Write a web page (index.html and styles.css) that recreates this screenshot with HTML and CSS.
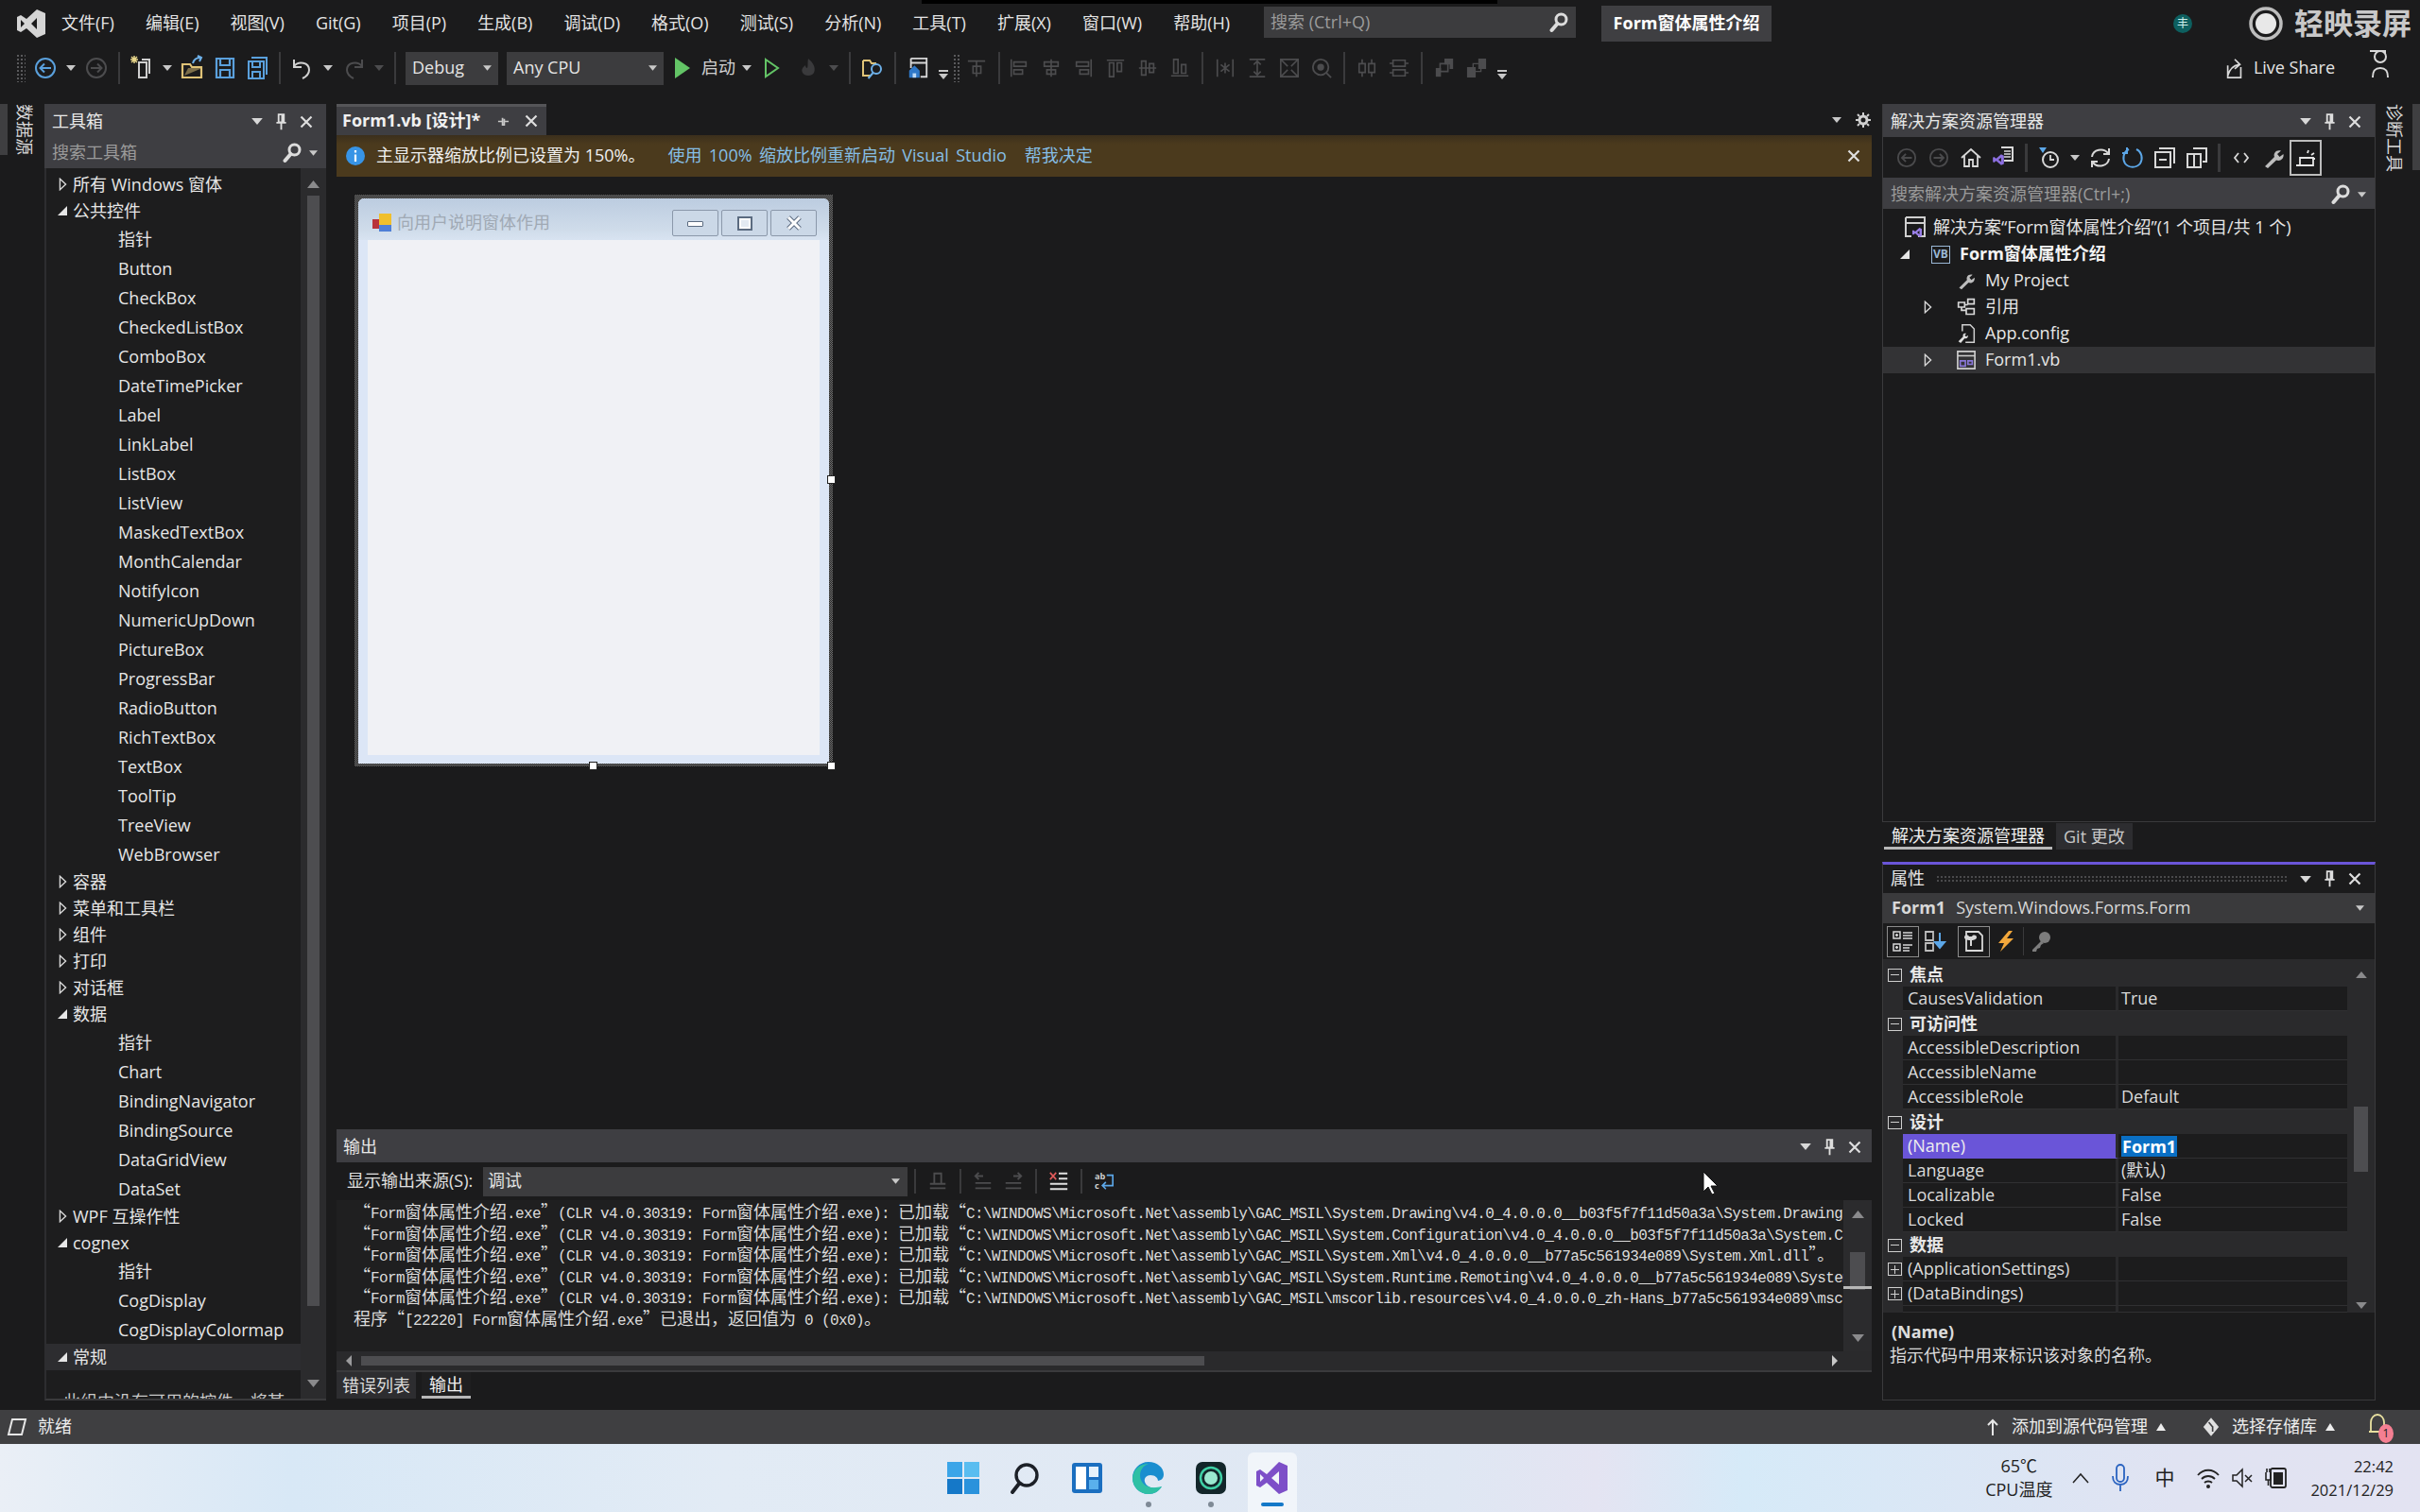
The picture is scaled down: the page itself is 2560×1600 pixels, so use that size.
FILE: index.html
```html
<!DOCTYPE html>
<html lang="zh-CN">
<head>
<meta charset="utf-8">
<title>Form窗体属性介绍</title>
<link rel="stylesheet" href="styles.css">
</head>
<body>
<svg class="defs" width="0" height="0">
  <symbol id="caret" viewBox="0 0 10 6"><path d="M0 0h10L5 6z" fill="currentColor"/></symbol>
  <symbol id="pin" viewBox="0 0 14 20"><path d="M4 1.500h6v9H4zM8 2v8M1.500 11h11M7 11v8" fill="none" stroke="currentColor" stroke-width="2"/></symbol>
  <symbol id="close" viewBox="0 0 14 14"><path d="M1.500 1.500l11 11M12.500 1.500l-11 11" fill="none" stroke="currentColor" stroke-width="2.200"/></symbol>
  <symbol id="lens" viewBox="0 0 20 22"><circle cx="12.500" cy="7.500" r="5.500" fill="none" stroke="currentColor" stroke-width="3"/><path d="M8.500 12L2.500 19" stroke="currentColor" stroke-width="4" stroke-linecap="round"/></symbol>
  <symbol id="open" viewBox="0 0 10 16"><path d="M1.500 1.500L8.500 8l-7 6.500z" fill="none" stroke="currentColor" stroke-width="1.600"/></symbol>
  <symbol id="shut" viewBox="0 0 12 12"><path d="M11 1v10H1z" fill="currentColor"/></symbol>
  <symbol id="circleL" viewBox="0 0 24 24"><circle cx="12" cy="12" r="10" fill="none" stroke="currentColor" stroke-width="2"/><path d="M18 12H7M11 7.500L6.500 12l4.500 4.500" fill="none" stroke="currentColor" stroke-width="2"/></symbol>
  <symbol id="circleR" viewBox="0 0 24 24"><circle cx="12" cy="12" r="10" fill="none" stroke="currentColor" stroke-width="2"/><path d="M6 12h11M13 7.500l4.500 4.500-4.500 4.500" fill="none" stroke="currentColor" stroke-width="2"/></symbol>
  <symbol id="save" viewBox="0 0 24 24"><path d="M3 2h18v20H3z M7 2v7h10V2 M7 22v-8h10v8" fill="none" stroke="currentColor" stroke-width="2.200"/></symbol>
  <symbol id="saveall" viewBox="0 0 24 24"><path d="M6 1h16v18 M3 5h16v18H3z M7 5v6h8V5 M7 23v-7h8v7" fill="none" stroke="currentColor" stroke-width="2"/></symbol>
  <symbol id="alL" viewBox="0 0 24 24"><path d="M3 2v20M6 5h14v5H6zM6 14h10v5H6z" fill="none" stroke="currentColor" stroke-width="1.800"/></symbol>
  <symbol id="alC" viewBox="0 0 24 24"><path d="M12 2v20M4 5h16v5H4zM7 14h10v5H7z" fill="none" stroke="currentColor" stroke-width="1.800"/></symbol>
  <symbol id="alR" viewBox="0 0 24 24"><path d="M21 2v20M4 5h14v5H4zM8 14h10v5H8z" fill="none" stroke="currentColor" stroke-width="1.800"/></symbol>
  <symbol id="alT" viewBox="0 0 24 24"><path d="M2 3h20M5 6h5v16H5zM14 6h5v10h-5z" fill="none" stroke="currentColor" stroke-width="1.800"/></symbol>
  <symbol id="alM" viewBox="0 0 24 24"><path d="M2 12h20M5 4h5v16H5zM14 7h5v10h-5z" fill="none" stroke="currentColor" stroke-width="1.800"/></symbol>
  <symbol id="alB" viewBox="0 0 24 24"><path d="M2 21h20M5 2h5v16H5zM14 8h5v10h-5z" fill="none" stroke="currentColor" stroke-width="1.800"/></symbol>
  <symbol id="spH" viewBox="0 0 24 24"><path d="M3 2v20M21 2v20M12 6v12M7 8l10 8M17 8L7 16" fill="none" stroke="currentColor" stroke-width="1.800"/></symbol>
  <symbol id="spV" viewBox="0 0 24 24"><path d="M3 2h18M3 22h18M12 5v14M8 8l4-4 4 4M8 16l4 4 4-4" fill="none" stroke="currentColor" stroke-width="1.800"/></symbol>
  <symbol id="full" viewBox="0 0 24 24"><path d="M2 2h20v20H2zM3 3l7 7M21 3l-7 7M3 21l7-7M21 21l-7-7" fill="none" stroke="currentColor" stroke-width="1.800"/></symbol>
  <symbol id="zoomd" viewBox="0 0 24 24"><circle cx="11" cy="11" r="9" fill="none" stroke="currentColor" stroke-width="2"/><circle cx="11" cy="11" r="4" fill="currentColor"/><path d="M17 17l6 6" stroke="currentColor" stroke-width="2"/></symbol>
  <symbol id="cenH" viewBox="0 0 24 24"><path d="M3 7h7v10H3zM14 7h7v10h-7zM6.500 2v5M6.500 17v5M17.500 2v5M17.500 17v5" fill="none" stroke="currentColor" stroke-width="1.800"/></symbol>
  <symbol id="cenV" viewBox="0 0 24 24"><path d="M5 3h14v7H5zM5 14h14v7H5zM1 6.500h4M19 6.500h4M1 17.500h4M19 17.500h4" fill="none" stroke="currentColor" stroke-width="1.800"/></symbol>
  <symbol id="front" viewBox="0 0 24 24"><path d="M12 1h10v12h-4V8h-6z" fill="currentColor"/><path d="M2 12h6v10H2z" fill="currentColor"/><path d="M7 7h9v9H7z" fill="none" stroke="currentColor" stroke-width="1.800"/></symbol>
  <symbol id="back" viewBox="0 0 24 24"><path d="M14 1h9v12h-9zM1 11h10v12H1z" fill="currentColor"/><path d="M8 7h9v9H8z" fill="none" stroke="currentColor" stroke-width="1.500"/></symbol>
  <symbol id="wrench" viewBox="0 0 24 24"><path d="M3 21l10-10c-1.500-4 2-8 7-6.500l-4 3.500 2.500 3 4-3c1 5-3.500 8-7.500 6.500L6 23z" fill="currentColor"/></symbol>
  <symbol id="vs" viewBox="0 0 24 24"><path d="M17 2l5 2.500v15L17 22 8 14l-4 3-2-1V8l2-1 4 3zM17 8l-5 4 5 4z" fill="currentColor" fill-rule="evenodd"/></symbol>
</svg>
<div class="blackout"></div>

<header class="titlebar">
  <svg class="vslogo" viewBox="0 0 30 30"><path d="M21 0l9 4v22l-9 4-11-10-6 4-4-2V8l4-2 6 4zM21 9l-6 6 6 6zM4 11v8l4-4z" fill="#d5d5d5" fill-rule="evenodd"/></svg>
  <nav class="menu">
    <span>文件(F)</span><span>编辑(E)</span><span>视图(V)</span><span>Git(G)</span><span>项目(P)</span><span>生成(B)</span><span>调试(D)</span><span>格式(O)</span><span>测试(S)</span><span>分析(N)</span><span>工具(T)</span><span>扩展(X)</span><span>窗口(W)</span><span>帮助(H)</span>
  </nav>
  <div class="qsearch"><span>搜索 (Ctrl+Q)</span><svg class="lens"><use href="#lens"/></svg></div>
  <div class="soltitle">Form窗体属性介绍</div>
  <div class="avatar">丰</div>
  <svg class="ring" viewBox="0 0 36 36"><circle cx="18" cy="18" r="16" fill="none" stroke="#bdbdbd" stroke-width="3.500"/><circle cx="18" cy="18" r="11" fill="#e8e8e8"/></svg>
  <div class="recname">轻映录屏</div>
</header>

<div class="toolbar">
  <span class="dots"></span>
  <span class="cell first blue"><svg class="i24"><use href="#circleL"/></svg></span>
  <span class="cw"><svg class="c10"><use href="#caret"/></svg></span>
  <span class="cell dim2"><svg class="i24"><use href="#circleR"/></svg></span>
  <span class="sep"></span>
  <span class="cell"><svg class="i28" viewBox="0 0 28 28"><path d="M11 8h8v16h-8zM14 5h8v15" fill="none" stroke="#cfcfcf" stroke-width="2"/><path d="M6 1v8M2 5h8M3 2l6 6M9 2L3 8" stroke="#e8d68a" stroke-width="1.500"/></svg></span>
  <span class="cw"><svg class="c10"><use href="#caret"/></svg></span>
  <span class="cell"><svg class="i28" viewBox="0 0 28 28"><path d="M3 10h8l2 3h10v11H3z" fill="none" stroke="#e0c377" stroke-width="2.200"/><path d="M5 22l4-8h15" fill="#e0c377" opacity=".5"/><path d="M14 9c1-4 4-6 8-6M19 1l4 2-2 4" fill="none" stroke="#6db0e8" stroke-width="2"/></svg></span>
  <span class="cell blue"><svg class="i24"><use href="#save"/></svg></span>
  <span class="cell blue"><svg class="i24"><use href="#saveall"/></svg></span>
  <span class="sep"></span>
  <span class="cell"><svg class="i24" viewBox="0 0 24 24"><path d="M3 3v8h8M3 10c5-6 16-4 16 4 0 4-3 7-7 9" fill="none" stroke="#d0d0d0" stroke-width="2"/></svg></span>
  <span class="cw"><svg class="c10"><use href="#caret"/></svg></span>
  <span class="cell dim2"><svg class="i24" viewBox="0 0 24 24"><path d="M21 3v8h-8M21 10c-5-6-16-4-16 4 0 4 3 7 7 9" fill="none" stroke="currentColor" stroke-width="2"/></svg></span>
  <span class="cw dim2"><svg class="c10"><use href="#caret"/></svg></span>
  <span class="sep"></span>
  <div class="combo debug"><span>Debug</span><svg class="c8"><use href="#caret"/></svg></div>
  <div class="combo cpu"><span>Any CPU</span><svg class="c8"><use href="#caret"/></svg></div>
  <svg class="play" viewBox="0 0 16 22"><path d="M0 0l16 11L0 22z" fill="#63c466"/></svg>
  <span class="runlabel">启动</span>
  <span class="cw tight"><svg class="c10"><use href="#caret"/></svg></span>
  <span class="cell"><svg class="i24" viewBox="0 0 24 24"><path d="M6 3l13 9-13 9z" fill="none" stroke="#63c466" stroke-width="2"/></svg></span>
  <span class="cell flame dim2"><svg class="i24" viewBox="0 0 24 24"><path d="M12 2c6 5 8 10 6 15-2 4-10 4-12 0-2-4 1-6 3-8 0 2 1 3 2 3 1-3 0-6 1-10z" fill="#3a3a3c"/></svg></span>
  <span class="cw dim2"><svg class="c10"><use href="#caret"/></svg></span>
  <span class="sep"></span>
  <span class="cell"><svg class="i24" viewBox="0 0 24 24"><path d="M2 4h7l2 3h5M2 4v16h8" fill="none" stroke="#e0c377" stroke-width="2"/><circle cx="16" cy="13" r="5" fill="none" stroke="#6db0e8" stroke-width="2"/><path d="M12.500 17l-5 6" stroke="#6db0e8" stroke-width="2"/></svg></span>
  <span class="sep"></span>
  <span class="cell"><svg class="i24" viewBox="0 0 24 26"><path d="M4 2h18v21H15M4 7h18M4 2v11" fill="none" stroke="#d6d6d6" stroke-width="2"/><path d="M2 16l6-6 6 6v8H2z" fill="#2f78c8"/><path d="M6 24v-5h4v5" fill="#bcd8f4"/></svg></span>
  <span class="cw more"><svg class="c10"><use href="#caret"/></svg></span>
  <span class="dots thin"></span>
  <span class="cell dim2"><svg class="i22" viewBox="0 0 24 24"><path d="M2 4h20M12 4v18M8 10h9v8H8z" fill="none" stroke="currentColor" stroke-width="1.800"/></svg></span>
  <span class="sep"></span>
  <span class="cell dim2 snug"><svg class="i22"><use href="#alL"/></svg></span><span class="cell dim2"><svg class="i22"><use href="#alC"/></svg></span><span class="cell dim2"><svg class="i22"><use href="#alR"/></svg></span><span class="cell dim2"><svg class="i22"><use href="#alT"/></svg></span><span class="cell dim2"><svg class="i22"><use href="#alM"/></svg></span><span class="cell dim2"><svg class="i22"><use href="#alB"/></svg></span>
  <span class="sep"></span>
  <span class="cell dim2"><svg class="i22"><use href="#spH"/></svg></span><span class="cell dim2"><svg class="i22"><use href="#spV"/></svg></span><span class="cell dim2"><svg class="i22"><use href="#full"/></svg></span><span class="cell dim2"><svg class="i22"><use href="#zoomd"/></svg></span>
  <span class="sep"></span>
  <span class="cell dim2"><svg class="i22"><use href="#cenH"/></svg></span><span class="cell dim2"><svg class="i22"><use href="#cenV"/></svg></span>
  <span class="sep"></span>
  <span class="cell dim2"><svg class="i22"><use href="#front"/></svg></span><span class="cell dim2"><svg class="i22"><use href="#back"/></svg></span>
  <span class="cw more"><svg class="c10"><use href="#caret"/></svg></span>
  <div class="share">
    <svg class="i24" viewBox="0 0 22 26"><path d="M3 10v14h15V12M3 22C5 14 9 10 16 9M11 3l6 6-6 5" fill="none" stroke="#d8d8d8" stroke-width="1.800"/></svg>
    <span>Live Share</span>
    <svg class="person" viewBox="0 0 24 32"><path d="M2 2h16v4M7 8a6 6 0 1 0 12 0 6 6 0 0 0-12 0M5 30c0-8 3-10 8-10s8 2 8 10" fill="none" stroke="#d8d8d8" stroke-width="2"/></svg>
  </div>
</div>

<main class="workspace">
  <aside class="strip">
    <span class="stripmark"></span>
    <span class="striptext">数据源</span>
  </aside>

  <section class="toolbox">
    <div class="phead"><span class="ptitle">工具箱</span><span class="trio"><svg class="c12"><use href="#caret"/></svg><svg class="pin"><use href="#pin"/></svg><svg class="x14"><use href="#close"/></svg></span></div>
    <div class="psearch"><span>搜索工具箱</span><span class="sr"><svg class="lens"><use href="#lens"/></svg><svg class="c8"><use href="#caret"/></svg></span></div>
    <div class="tboxbody">
      <div class="tlist">
        <div class="cat"><svg class="tw"><use href="#open"/></svg>所有 Windows 窗体</div>
        <div class="cat"><svg class="ts"><use href="#shut"/></svg>公共控件</div>
        <div class="item">指针</div><div class="item">Button</div><div class="item">CheckBox</div><div class="item">CheckedListBox</div><div class="item">ComboBox</div><div class="item">DateTimePicker</div><div class="item">Label</div><div class="item">LinkLabel</div><div class="item">ListBox</div><div class="item">ListView</div><div class="item">MaskedTextBox</div><div class="item">MonthCalendar</div><div class="item">NotifyIcon</div><div class="item">NumericUpDown</div><div class="item">PictureBox</div><div class="item">ProgressBar</div><div class="item">RadioButton</div><div class="item">RichTextBox</div><div class="item">TextBox</div><div class="item">ToolTip</div><div class="item">TreeView</div><div class="item">WebBrowser</div>
        <div class="cat"><svg class="tw"><use href="#open"/></svg>容器</div>
        <div class="cat"><svg class="tw"><use href="#open"/></svg>菜单和工具栏</div>
        <div class="cat"><svg class="tw"><use href="#open"/></svg>组件</div>
        <div class="cat"><svg class="tw"><use href="#open"/></svg>打印</div>
        <div class="cat"><svg class="tw"><use href="#open"/></svg>对话框</div>
        <div class="cat"><svg class="ts"><use href="#shut"/></svg>数据</div>
        <div class="item">指针</div><div class="item">Chart</div><div class="item">BindingNavigator</div><div class="item">BindingSource</div><div class="item">DataGridView</div><div class="item">DataSet</div>
        <div class="cat"><svg class="tw"><use href="#open"/></svg>WPF 互操作性</div>
        <div class="cat"><svg class="ts"><use href="#shut"/></svg>cognex</div>
        <div class="item">指针</div><div class="item">CogDisplay</div><div class="item">CogDisplayColormap</div>
        <div class="cat hot"><svg class="ts"><use href="#shut"/></svg>常规</div>
        <div class="note">此组中没有可用的控件。将某项拖至此文本可将其添加到工具箱。</div>
      </div>
      <div class="vsb">
        <svg class="sbup"><use href="#caret"/></svg>
        <span class="sbthumb"></span>
        <svg class="sbdn"><use href="#caret"/></svg>
      </div>
    </div>
  </section>

  <section class="center">
    <div class="tabwell">
      <div class="doctab"><b>Form1.vb [设计]*</b><svg class="tabpin" viewBox="0 0 14 14"><path d="M1 7h5M6 3v8h2V4M8 7h5" fill="none" stroke="currentColor" stroke-width="1.800"/></svg><svg class="x14"><use href="#close"/></svg></div>
      <div class="wellend"><svg class="c10"><use href="#caret"/></svg><svg class="gear" viewBox="0 0 16 16"><circle cx="8" cy="8" r="4" fill="none" stroke="#d0d0d0" stroke-width="3"/><path d="M8 0v3M8 13v3M0 8h3M13 8h3M2 2l2 2M12 12l2 2M14 2l-2 2M4 12l-2 2" stroke="#d0d0d0" stroke-width="2"/></svg></div>
    </div>
    <div class="infobar">
      <svg class="info" viewBox="0 0 20 20"><circle cx="10" cy="10" r="10" fill="#3794e6"/><path d="M10 4v2.500M10 8.500V16" stroke="#fff" stroke-width="2.200"/></svg>
      <span class="infotext">主显示器缩放比例已设置为 150%。</span>
      <span class="infolink first-link">使用 100% 缩放比例重新启动 Visual Studio</span>
      <span class="infolink">帮我决定</span>
      <svg class="x14 infox"><use href="#close"/></svg>
    </div>
    <div class="designer">
      <div class="formsel">
        <div class="winform">
          <div class="wintitle">
            <svg class="winicon" viewBox="0 0 22 20"><rect x="1" y="6" width="9" height="10" fill="#b8323a"/><rect x="8" y="0" width="13" height="12" fill="#f0bf2c"/><rect x="8" y="12" width="13" height="7" fill="#4f7fd6"/></svg>
            <span class="wintext">向用户说明窗体作用</span>
            <span class="winbtns">
              <span class="winbtn"><i class="gl-min"></i></span>
              <span class="winbtn"><i class="gl-max"></i></span>
              <span class="winbtn"><svg class="gl-x" viewBox="0 0 16 14"><path d="M2 1l12 12M14 1L2 13" stroke="#5b6b80" stroke-width="5"/><path d="M2 1l12 12M14 1L2 13" stroke="#fff" stroke-width="3"/></svg></span>
            </span>
          </div>
          <div class="winclient"></div>
        </div>
        <i class="handle h-e"></i><i class="handle h-s"></i><i class="handle h-se"></i>
      </div>
    </div>
    <div class="output">
      <div class="phead outhead"><span class="ptitle">输出</span><span class="trio"><svg class="c12"><use href="#caret"/></svg><svg class="pin"><use href="#pin"/></svg><svg class="x14"><use href="#close"/></svg></span></div>
      <div class="outtools">
        <span class="outlabel">显示输出来源(S):</span>
        <div class="combo source"><span>调试</span><svg class="c8"><use href="#caret"/></svg></div>
        <span class="osep"></span>
        <svg class="oi dim2" viewBox="0 0 24 24"><path d="M8 14V3h8v11M3 15h18M3 20h18" fill="none" stroke="currentColor" stroke-width="2"/></svg>
        <span class="osep"></span>
        <svg class="oi dim2" viewBox="0 0 24 24"><path d="M12 6H3M7 2L3 6l4 4M3 14h18M3 20h18" fill="none" stroke="currentColor" stroke-width="2"/></svg>
        <svg class="oi dim2" viewBox="0 0 24 24"><path d="M12 6h9M17 2l4 4-4 4M3 14h18M3 20h18" fill="none" stroke="currentColor" stroke-width="2"/></svg>
        <span class="osep"></span>
        <svg class="oi" viewBox="0 0 24 24"><path d="M12 3h10M12 9h10M2 15h20M2 21h20" stroke="#e0e0e0" stroke-width="2"/><path d="M2 2l7 8M9 2l-7 8" stroke="#e05a5a" stroke-width="1.800"/></svg>
        <span class="osep"></span>
        <svg class="oi" viewBox="0 0 24 24"><text x="1" y="10" class="wraptext">ab</text><text x="1" y="21" class="wraptext">c</text><path d="M15 5h7v12H11M14 13l-4 4 4 4" fill="none" stroke="#5ca7e8" stroke-width="1.800"/></svg>
        <svg class="cursor" viewBox="0 0 16 26"><path d="M1 1v21l5-5 4 8 3-1-4-8h7z" fill="#fff" stroke="#111" stroke-width="1"/></svg>
      </div>
      <div class="outbody">
        <div class="outtext">
<div class="ol"><span class="z">“</span>Form<span class="z">窗体属性介绍</span>.exe<span class="z">”</span>(CLR v4.0.30319: Form<span class="z">窗体属性介绍</span>.exe): <span class="z">已加载“</span>C:\WINDOWS\Microsoft.Net\assembly\GAC_MSIL\System.Drawing\v4.0_4.0.0.0__b03f5f7f11d50a3a\System.Drawing.dll<span class="z">”。</span></div>
<div class="ol"><span class="z">“</span>Form<span class="z">窗体属性介绍</span>.exe<span class="z">”</span>(CLR v4.0.30319: Form<span class="z">窗体属性介绍</span>.exe): <span class="z">已加载“</span>C:\WINDOWS\Microsoft.Net\assembly\GAC_MSIL\System.Configuration\v4.0_4.0.0.0__b03f5f7f11d50a3a\System.Configuration.dll<span class="z">”。</span></div>
<div class="ol"><span class="z">“</span>Form<span class="z">窗体属性介绍</span>.exe<span class="z">”</span>(CLR v4.0.30319: Form<span class="z">窗体属性介绍</span>.exe): <span class="z">已加载“</span>C:\WINDOWS\Microsoft.Net\assembly\GAC_MSIL\System.Xml\v4.0_4.0.0.0__b77a5c561934e089\System.Xml.dll<span class="z">”。</span></div>
<div class="ol"><span class="z">“</span>Form<span class="z">窗体属性介绍</span>.exe<span class="z">”</span>(CLR v4.0.30319: Form<span class="z">窗体属性介绍</span>.exe): <span class="z">已加载“</span>C:\WINDOWS\Microsoft.Net\assembly\GAC_MSIL\System.Runtime.Remoting\v4.0_4.0.0.0__b77a5c561934e089\System.Runtime.Remoting.dll<span class="z">”。</span></div>
<div class="ol"><span class="z">“</span>Form<span class="z">窗体属性介绍</span>.exe<span class="z">”</span>(CLR v4.0.30319: Form<span class="z">窗体属性介绍</span>.exe): <span class="z">已加载“</span>C:\WINDOWS\Microsoft.Net\assembly\GAC_MSIL\mscorlib.resources\v4.0_4.0.0.0_zh-Hans_b77a5c561934e089\mscorlib.resources.dll<span class="z">”。</span></div>
<div class="ol"><span class="z">程序“</span>[22220] Form<span class="z">窗体属性介绍</span>.exe<span class="z">”已退出，返回值为</span> 0 (0x0)<span class="z">。</span></div>
        </div>
        <div class="outvsb">
          <svg class="sbup"><use href="#caret"/></svg>
          <span class="outthumb"></span>
          <span class="outmark"></span>
          <svg class="sbdn"><use href="#caret"/></svg>
        </div>
      </div>
      <div class="hsb">
        <svg class="harrow" viewBox="0 0 6 12"><path d="M6 0v12L0 6z" fill="currentColor"/></svg>
        <span class="hthumb"></span>
        <svg class="harrow right" viewBox="0 0 6 12"><path d="M0 0v12l6-6z" fill="currentColor"/></svg>
      </div>
      <div class="outtabs"><span class="btab">错误列表</span><span class="btab on">输出</span></div>
    </div>
  </section>

  <section class="rightcol">
    <div class="solution">
      <div class="phead"><span class="ptitle">解决方案资源管理器</span><span class="trio"><svg class="c12"><use href="#caret"/></svg><svg class="pin"><use href="#pin"/></svg><svg class="x14"><use href="#close"/></svg></span></div>
      <div class="soltools">
        <span class="sc dim3"><svg class="i22"><use href="#circleL"/></svg></span>
        <span class="sc dim3"><svg class="i22"><use href="#circleR"/></svg></span>
        <span class="sc"><svg class="i24" viewBox="0 0 24 24"><path d="M2 12L12 3l10 9M5 10v11h5v-7h4v7h5V10" fill="none" stroke="#d8d8d8" stroke-width="1.800"/></svg></span>
        <span class="sc"><svg class="i24" viewBox="0 0 24 24"><path d="M10 1h12v14H13" fill="none" stroke="#d8d8d8" stroke-width="2"/><path d="M13 5h7M13 8h7M13 11h7" stroke="#d8d8d8" stroke-width="1.500"/><g color="#8c6fe0"><use href="#vs" x="0" y="6" width="14" height="16"/></g></svg></span>
        <span class="ssep"></span>
        <span class="sc"><svg class="i24" viewBox="0 0 24 24"><circle cx="13" cy="14" r="8" fill="none" stroke="#d8d8d8" stroke-width="2"/><path d="M13 9v5h4" fill="none" stroke="#d8d8d8" stroke-width="1.800"/><path d="M1 1h8L5 7z" fill="#5ca7e8"/></svg></span>
        <span class="sc narrow"><svg class="c10"><use href="#caret"/></svg></span>
        <span class="sc"><svg class="i24" viewBox="0 0 24 24"><path d="M3 11C4 3 15 1 20 7M21 2v6h-6M21 13c-1 8-12 10-17 4M3 22v-6h6" fill="none" stroke="#d8d8d8" stroke-width="2"/></svg></span>
        <span class="sc"><svg class="i24" viewBox="0 0 24 24"><path d="M8 3C2 6 1 13 4 18c4 5 12 5 16 0 3-5 2-12-4-15M6 1v6H1" fill="none" stroke="#5ca7e8" stroke-width="2"/></svg></span>
        <span class="sc"><svg class="i24" viewBox="0 0 24 24"><path d="M6 2h16v16M2 6h16v16H2zM6 14h8" fill="none" stroke="#d8d8d8" stroke-width="2"/></svg></span>
        <span class="sc"><svg class="i24" viewBox="0 0 24 24"><path d="M8 2h14v14h-4M2 8h14v14H2zM9 8v14" fill="none" stroke="#d8d8d8" stroke-width="2"/></svg></span>
        <span class="ssep wide"></span>
        <span class="sc"><svg class="i16" viewBox="0 0 16 12"><path d="M5 1L1 6l4 5M11 1l4 5-4 5" fill="none" stroke="#d8d8d8" stroke-width="1.800"/></svg></span>
        <span class="sc lightwrench"><svg class="i24"><use href="#wrench"/></svg></span>
        <span class="sc active"><svg class="i24" viewBox="0 0 24 24"><path d="M2 20h18v-8H6v8M14 7l1-3M18 9l3-2M19 13h3" fill="none" stroke="#e6e6e6" stroke-width="1.800"/></svg></span>
      </div>
      <div class="psearch solsearch"><span>搜索解决方案资源管理器(Ctrl+;)</span><span class="sr"><svg class="lens"><use href="#lens"/></svg><svg class="c8"><use href="#caret"/></svg></span></div>
      <div class="tree">
        <div class="trow"><span class="tx"></span><svg class="ti sol" viewBox="0 0 22 24"><path d="M1 1h20v20H14M1 1v20h6M1 7h20" fill="none" stroke="#cfcfcf" stroke-width="2"/><g color="#9a7fe8"><use href="#vs" x="6" y="11" width="14" height="12"/></g></svg><span class="tl">解决方案“Form窗体属性介绍”(1 个项目/共 1 个)</span></div>
        <div class="trow"><span class="tx wide arrowcell"><svg class="ts"><use href="#shut"/></svg></span><span class="vb">VB</span><b class="tl vbl">Form窗体属性介绍</b></div>
        <div class="trow"><span class="tx"></span><span class="tx2"></span><svg class="ti lightwrench"><use href="#wrench"/></svg><span class="tl">My Project</span></div>
        <div class="trow"><span class="tx"></span><span class="tx2 arrowcell"><svg class="tw"><use href="#open"/></svg></span><svg class="ti" viewBox="0 0 24 22"><path d="M2 5h8v6H2zM14 1h8v6h-8zM12 13h10v7H12zM10 8h4M6 11v4h6" fill="none" stroke="#d8d8d8" stroke-width="2"/></svg><span class="tl">引用</span></div>
        <div class="trow"><span class="tx"></span><span class="tx2"></span><svg class="ti" viewBox="0 0 22 24"><path d="M6 9V1h10l5 5v17H10" fill="none" stroke="#cfcfcf" stroke-width="1.800"/><path d="M1 22l6-6c-1-3 1-5 4-4l-2 2 2 2 2-2c1 3-2 5-4 4l-5 6z" fill="#e0e0e0"/></svg><span class="tl">App.config</span></div>
        <div class="trow sel"><span class="tx"></span><span class="tx2 arrowcell"><svg class="tw"><use href="#open"/></svg></span><svg class="ti" viewBox="0 0 22 22"><path d="M1 1h20v20H1zM1 6h20" fill="none" stroke="#cfcfcf" stroke-width="1.800"/><path d="M4 12h6v6H4zM13 12h5v4h-5z" fill="none" stroke="#8a78d8" stroke-width="1.800"/></svg><span class="tl">Form1.vb</span></div>
      </div>
    </div>
    <div class="soltabs"><span class="stab on">解决方案资源管理器</span><span class="stab">Git 更改</span></div>
    <div class="props">
      <div class="phead prophead"><span class="ptitle">属性</span><span class="grip"></span><span class="trio"><svg class="c12"><use href="#caret"/></svg><svg class="pin"><use href="#pin"/></svg><svg class="x14"><use href="#close"/></svg></span></div>
      <div class="objrow"><b>Form1</b><span>System.Windows.Forms.Form</span><svg class="c8"><use href="#caret"/></svg></div>
      <div class="proptools">
        <span class="pt boxed"><svg class="i24" viewBox="0 0 24 24"><path d="M2 2h7v7H2zM2 15h7v7H2zM4 5.500h3M5.500 4v3M4 18.500h3M5.500 17v3M12 3h10M12 6h10M12 9h10M12 16h10M12 19h7M12 22h7" fill="none" stroke="#d8d8d8" stroke-width="1.500"/></svg></span>
        <span class="pt"><svg class="i24" viewBox="0 0 24 24"><path d="M2 2h8v9H2zM2 14h8v8H2z" fill="none" stroke="#bdbdbd" stroke-width="1.800"/><path d="M17 3v14M12 13l5 6 5-6z" fill="#5ca7e8" stroke="#5ca7e8" stroke-width="2"/></svg></span>
        <span class="pt boxed gapl"><svg class="i24" viewBox="0 0 24 24"><path d="M4 2h13l4 4v16H4z" fill="none" stroke="#d8d8d8" stroke-width="1.800"/><path d="M2 8c0-3 4-3 5-1h3c1-2 5-2 5 1 0 2-3 3-5 3v6H8v-6c-3 0-6-1-6-3z" fill="#d8d8d8"/></svg></span>
        <span class="pt"><svg class="i24" viewBox="0 0 24 24"><path d="M15 1L4 14h6L6 23l14-14h-7l6-8z" fill="#f2a73b"/></svg></span>
        <span class="psep"></span>
        <span class="pt"><svg class="i24" viewBox="0 0 24 24"><circle cx="16" cy="8" r="6" fill="#7d7d7d"/><path d="M12 12L3 21v2h4l1-3 3-1 1-3 3-2z" fill="#7d7d7d"/></svg></span>
      </div>
      <div class="pgrid">
        <div class="prows">
          <div class="psec"><span class="exp minus"></span><b>焦点</b></div>
          <div class="prow"><span class="gut"></span><span class="pk">CausesValidation</span><span class="pv">True</span></div>
          <div class="psec"><span class="exp minus"></span><b>可访问性</b></div>
          <div class="prow"><span class="gut"></span><span class="pk">AccessibleDescription</span><span class="pv"></span></div>
          <div class="prow"><span class="gut"></span><span class="pk">AccessibleName</span><span class="pv"></span></div>
          <div class="prow"><span class="gut"></span><span class="pk">AccessibleRole</span><span class="pv">Default</span></div>
          <div class="psec"><span class="exp minus"></span><b>设计</b></div>
          <div class="prow"><span class="gut"></span><span class="pk picked">(Name)</span><span class="pv"><b class="hi">Form1</b></span></div>
          <div class="prow"><span class="gut"></span><span class="pk">Language</span><span class="pv">(默认)</span></div>
          <div class="prow"><span class="gut"></span><span class="pk">Localizable</span><span class="pv">False</span></div>
          <div class="prow"><span class="gut"></span><span class="pk">Locked</span><span class="pv">False</span></div>
          <div class="psec"><span class="exp minus"></span><b>数据</b></div>
          <div class="prow"><span class="gut"><span class="exp plus"></span></span><span class="pk">(ApplicationSettings)</span><span class="pv"></span></div>
          <div class="prow"><span class="gut"><span class="exp plus"></span></span><span class="pk">(DataBindings)</span><span class="pv"></span></div>
          <div class="prow stub"><span class="gut"></span><span class="pk"></span><span class="pv"></span></div>
        </div>
        <div class="pvsb">
          <svg class="sbup"><use href="#caret"/></svg>
          <span class="pthumb"></span>
          <svg class="sbdn"><use href="#caret"/></svg>
        </div>
      </div>
      <div class="pdesc"><b>(Name)</b><span>指示代码中用来标识该对象的名称。</span></div>
    </div>
  </section>

  <aside class="strip rstrip">
    <span class="striptext">诊断工具</span>
    <span class="stripmark"></span>
  </aside>
</main>

<footer class="status">
  <svg class="stico" viewBox="0 0 22 20"><path d="M6 2h14l-4 16H2z" fill="none" stroke="#e6e6e6" stroke-width="2"/></svg>
  <span class="ready">就绪</span>
  <div class="stright">
    <svg class="up" viewBox="0 0 12 18"><path d="M6 18V2M1 7l5-5 5 5" fill="none" stroke="#e6e6e6" stroke-width="2"/></svg>
    <span>添加到源代码管理</span>
    <span class="tri"></span>
    <svg class="gitd" viewBox="0 0 22 24"><path d="M11 0l10 12-10 12L1 12z" fill="#e0e0e0"/><path d="M8 6l5 6v6M13 12v-1" fill="none" stroke="#3f3f41" stroke-width="2"/></svg>
    <span>选择存储库</span>
    <span class="tri"></span>
    <span class="bell"><svg viewBox="0 0 20 26"><path d="M3 20V10c0-4 3-8 7-8s7 4 7 8v10M1 20h18" fill="none" stroke="#e8e0a0" stroke-width="1.800"/></svg><i class="bellcount">1</i></span>
  </div>
</footer>

<footer class="taskbar">
  <div class="dock">
    <span class="tk"><svg viewBox="0 0 36 36"><path d="M1 1h16v16H1z" fill="#3ba5e8"/><path d="M19 1h16v16H19z" fill="#59bdf0"/><path d="M1 19h16v16H1z" fill="#1578c8"/><path d="M19 19h16v16H19z" fill="#2a92dc"/></svg></span>
    <span class="tk"><svg viewBox="0 0 36 36"><circle cx="20" cy="15" r="11" fill="none" stroke="#1c2027" stroke-width="3.400"/><path d="M12 24l-7 9" stroke="#1c2027" stroke-width="4" stroke-linecap="round"/></svg></span>
    <span class="tk"><svg viewBox="0 0 36 36"><rect x="2" y="2" width="32" height="32" rx="3" fill="#1b6fc0"/><rect x="6" y="6" width="11" height="24" fill="#fff"/><rect x="20" y="6" width="10" height="11" fill="#e7f2fb"/><rect x="20" y="20" width="10" height="10" fill="#5ab0ec"/></svg></span>
    <span class="tk dotted"><svg viewBox="0 0 36 36"><path d="M18 1C8 1 1 9 1 18c0 10 8 17 17 17 6 0 11-3 14-8-6 3-16 2-18-5-1-4 2-7 6-7 5 0 8 3 8 6 5-1 6-4 6-7C34 7 27 1 18 1z" fill="#1a8ecf"/><path d="M1 18C2 8 10 3 18 3c-6 2-9 7-9 12 0 9 8 16 23 12-3 5-8 8-14 8C8 35 1 27 1 18z" fill="#2fc0a4"/></svg></span>
    <span class="tk dotted"><svg viewBox="0 0 36 36"><rect x="2" y="1" width="32" height="34" rx="7" fill="#13262a"/><circle cx="18" cy="18" r="11" fill="none" stroke="#3fd0a5" stroke-width="2.500"/><circle cx="18" cy="18" r="7" fill="#9ae8cf"/></svg></span>
    <span class="tk tkon"><svg viewBox="0 0 36 36"><path d="M25 1l9 4v26l-9 4-13-12-7 5-4-2V11l4-2 7 5zM25 11l-8 7 8 7zM5 14v8l4-4z" fill="#7d4fc8" fill-rule="evenodd"/></svg></span>
  </div>
  <div class="tray">
    <div class="temp"><span>65℃</span><span>CPU温度</span></div>
    <svg class="tr chev" viewBox="0 0 18 12"><path d="M1 11l8-9 8 9" fill="none" stroke="#222" stroke-width="1.500"/></svg>
    <svg class="tr mic" viewBox="0 0 18 30"><rect x="5" y="1" width="8" height="18" rx="4" fill="none" stroke="#2a63c0" stroke-width="1.800"/><path d="M1 13c0 6 3 9 8 9s8-3 8-9M9 22v7" fill="none" stroke="#2a63c0" stroke-width="1.800"/></svg>
    <span class="ime">中</span>
    <svg class="tr wifi" viewBox="0 0 24 24"><path d="M1 9c6-7 16-7 22 0M5 13c4-4 10-4 14 0M8 17c2-2 6-2 8 0" fill="none" stroke="#222" stroke-width="1.800"/><circle cx="12" cy="21" r="2" fill="#222"/></svg>
    <svg class="tr spk" viewBox="0 0 24 24"><path d="M2 9h4l6-6v18l-6-6H2z" fill="none" stroke="#222" stroke-width="1.500"/><path d="M15 9l7 7M22 9l-7 7" stroke="#222" stroke-width="1.500"/></svg>
    <svg class="tr bat" viewBox="0 0 26 24"><rect x="6" y="2" width="16" height="20" rx="2" fill="none" stroke="#222" stroke-width="1.800"/><rect x="9" y="6" width="10" height="13" fill="#222"/><path d="M1 6v8h5V6M3.500 14v6M2 6V2M5 6V2" fill="none" stroke="#222" stroke-width="1.600"/></svg>
    <div class="clock"><span>22:42</span><span>2021/12/29</span></div>
  </div>
</footer>
</body>
</html>
```

FILE: styles.css
```css
* { box-sizing: border-box; }
html, body { margin: 0; height: 100%; }
body {
  width: 2560px; height: 1600px; overflow: hidden;
  display: flex; flex-direction: column;
  position: relative;
  background: #1b1b1c; color: #e6e6e6;
  font: 18px/1.2 "Open Sans", "Noto Sans CJK SC", sans-serif;
}
.defs { position: absolute; }
svg { display: block; flex: none; overflow: visible; }
.blackout { position: absolute; left: 975px; top: 0; width: 609px; height: 4px; background: #000; }

.c8 { width: 9px; height: 6px; color: #c8c8c8; }
.c10 { width: 10px; height: 6px; color: #c8c8c8; }
.c12 { width: 12px; height: 7px; color: #d8d8d8; }
.x14 { width: 14px; height: 14px; color: #dedede; }
.i16 { width: 16px; height: 12px; }
.i22 { width: 22px; height: 22px; }
.i24 { width: 24px; height: 24px; }
.i28 { width: 28px; height: 28px; }
.pin { width: 13px; height: 20px; color: #dedede; }
.lens { width: 20px; height: 22px; color: #dcdcdc; }

/* title */
.titlebar { height: 50px; flex: none; display: flex; align-items: center; }
.vslogo { width: 30px; height: 30px; margin-left: 18px; }
.menu { display: flex; gap: 33px; margin-left: 17px; font-size: 18px; white-space: nowrap; color: #e4e4e4; }
.qsearch { width: 330px; height: 33px; margin: -3px 0 0 36px; background: #3c3c3e; display: flex; align-items: center; justify-content: space-between; padding: 0 8px 0 7px; color: #9b9b9b; }
.soltitle { width: 180px; height: 38px; margin-left: 27px; background: #3f3f42; display: flex; align-items: center; justify-content: center; font-weight: 700; color: #fff; }
.avatar { width: 20px; height: 20px; margin-left: 425px; border-radius: 50%; background: #0d5f5f; color: #d0f0ee; font-size: 12px; display: flex; align-items: center; justify-content: center; }
.ring { width: 36px; height: 36px; margin-left: 60px; }
.recname { margin-left: 12px; font-size: 31px; font-weight: 700; color: #c8c8c8; white-space: nowrap; }

/* toolbar */
.toolbar { height: 44px; flex: none; display: flex; align-items: center; padding-left: 17px; color: #d0d0d0; }
.dots { width: 10px; height: 30px; background-image: radial-gradient(#5a5a5c 1px, transparent 1.200px); background-size: 4px 4px; }
.dots.thin { width: 8px; }
.cell { width: 34px; height: 34px; flex: none; display: flex; align-items: center; justify-content: center; }
.cell.first { margin-left: 4px; }
.cell.snug { margin-left: -3px; }
.cw { width: 20px; flex: none; display: flex; justify-content: center; }
.cw.tight { margin-left: 3px; width: 18px; }
.cw.more { align-items: flex-end; height: 24px; position: relative; }
.cw.more::before { content: ""; position: absolute; left: 5px; width: 10px; height: 2px; bottom: 8px; background: #c8c8c8; }
.flame { margin-left: 5px; }
.sep { width: 2px; height: 34px; margin: 0 6px; flex: none; background: #3a3a3c; }
.blue { color: #5aa0dc; }
.dim2 { color: #4c4c4e; }
.dim2 .c10 { color: #4c4c4e; }
.combo { height: 35px; flex: none; background: #3c3c3e; display: flex; align-items: center; justify-content: space-between; padding: 0 7px 0 7px; color: #e4e4e4; }
.debug { width: 98px; margin-left: 4px; }
.cpu { width: 166px; margin-left: 9px; }
.play { width: 16px; height: 22px; margin-left: 12px; }
.runlabel { margin-left: 12px; white-space: nowrap; }
.share { margin-left: auto; display: flex; align-items: center; padding-right: 31px; white-space: nowrap; color: #e4e4e4; }
.share span { margin-left: 8px; }
.person { width: 24px; height: 32px; margin: -8px 0 0 35px; }

/* workspace */
.workspace { flex: 1; min-height: 0; display: flex; padding: 16px 0 10px; }
.strip { width: 47px; flex: none; display: flex; align-items: flex-start; }
.stripmark { width: 8px; height: 54px; background: #3f3f41; flex: none; }
.striptext { writing-mode: vertical-rl; text-orientation: sideways; margin-left: 6px; line-height: 24px; white-space: nowrap; color: #d6d6d6; }
.rstrip { justify-content: flex-end; }
.rstrip .striptext { margin: 0 7px 0 0; }
.rstrip .stripmark { height: 70px; }

.phead { height: 35px; flex: none; background: #3e3e42; display: flex; align-items: center; justify-content: space-between; padding: 2px 14px 0 8px; }
.ptitle { color: #e8e8e8; }
.trio { display: flex; align-items: center; gap: 13px; }
.psearch { height: 33px; flex: none; background: #3e3e42; display: flex; align-items: center; justify-content: space-between; padding: 0 9px 0 8px; color: #9a9a9a; }
.solsearch { padding-top: 2px; }
.sr { display: flex; align-items: center; gap: 8px; }

/* toolbox */
.toolbox { width: 298px; flex: none; display: flex; flex-direction: column; }
.tboxbody { flex: 1; min-height: 0; display: flex; border-left: 2px solid #2d2d30; border-bottom: 2px solid #3a3a3c; }
.tlist { flex: 1; min-width: 0; padding-top: 3px; overflow: hidden; background: #1d1d1e; }
.cat { height: 28px; display: flex; align-items: center; white-space: nowrap; padding: 1px 0 0 28px; position: relative; }
.cat svg { position: absolute; }
.cat .tw { left: 13px; top: 7px; }
.cat .ts { left: 11px; top: 8px; }
.tw { width: 9px; height: 14px; color: #d8d8d8; }
.ts { width: 12px; height: 12px; color: #e6e6e6; }
.cat.hot { background: #2d2d30; }
.item { height: 31px; line-height: 33px; padding-left: 76px; white-space: nowrap; }
.note { padding: 21px 14px 0 18px; line-height: 24px; color: #c8c8c8; }
.vsb { width: 27px; flex: none; background: #2b2b2d; display: flex; flex-direction: column; align-items: center; padding-top: 13px; }
.sbup { width: 13px; height: 8px; color: #8a8a8c; transform: rotate(180deg); flex: none; }
.sbdn { width: 13px; height: 8px; color: #8a8a8c; flex: none; margin-top: auto; }
.sbthumb { width: 13px; height: 1175px; margin-top: 8px; background: #4d4d50; flex: none; }
.vsb .sbdn { margin-bottom: 12px; }

/* center */
.center { width: 1624px; margin-left: 11px; flex: none; display: flex; flex-direction: column; }
.tabwell { height: 33px; flex: none; display: flex; justify-content: space-between; }
.doctab { width: 222px; background: #3e3e42; border-top: 3px solid #555558; display: flex; align-items: center; padding-left: 6px; white-space: nowrap; }
.doctab b { color: #f0f0f0; }
.tabpin { width: 13px; height: 13px; margin-left: 18px; color: #c8c8c8; }
.doctab .x14 { margin-left: 16px; }
.wellend { display: flex; align-items: center; gap: 15px; padding-right: 1px; }
.gear { width: 16px; height: 16px; }
.infobar { height: 44px; flex: none; display: flex; align-items: center; padding-left: 10px; background: linear-gradient(#3b2f1c, #4b3a1d 22%, #4b3a1d); white-space: nowrap; }
.info { width: 20px; height: 20px; }
.infotext { margin-left: 12px; color: #f0f0f0; }
.infolink { margin-left: 19px; color: #86bfe6; }
.infolink.first-link { margin-left: 24px; word-spacing: 2.700px; }
.infox { margin-left: auto; margin-right: 12px; }
.designer { flex: 1; min-height: 0; padding: 19px 0 0 19px; }
.formsel { width: 506px; height: 605px; padding: 4px 4px 3px; position: relative; background: repeating-conic-gradient(#6a6a6a 0 25%, #2a2a2a 0 50%) 0 0 / 2px 2px; }
.winform { height: 100%; display: flex; flex-direction: column; background: #dce6f6; border-radius: 6px 6px 0 0; padding: 0 10px 9px; }
.wintitle { height: 44px; flex: none; display: flex; align-items: center; margin: 0 -10px; padding: 8px 13px 0 14px; background: linear-gradient(#bccce0, #cfdcea 75%, #d8e3f1); border-radius: 6px 6px 0 0; }
.winicon { width: 22px; height: 20px; }
.wintext { margin-left: 5px; color: #a0a9b4; white-space: nowrap; }
.winbtns { margin-left: auto; display: flex; gap: 3px; }
.winbtn { width: 49px; height: 28px; border: 1px solid #8b98aa; border-radius: 2px; background: #cbd8e7; display: flex; align-items: center; justify-content: center; }
.gl-min { width: 17px; height: 6px; background: #fff; border: 1px solid #5b6b80; border-radius: 1px; margin-top: 2px; }
.gl-max { width: 16px; height: 15px; background: #e3eaf2; border: 2px solid #5b6b80; box-shadow: inset 0 0 0 2px #fff; }
.gl-x { width: 16px; height: 14px; }
.winclient { flex: 1; background: #f0f1f5; }
.handle { position: absolute; width: 9px; height: 9px; background: #fff; border: 1px solid #222; }
.h-e { right: -3px; top: 297px; }
.h-s { left: 248px; bottom: -4px; }
.h-se { right: -3px; bottom: -4px; }

/* output */
.output { height: 287px; margin-top: 5px; flex: none; display: flex; flex-direction: column; }
.outhead { padding: 2px 11px 0 7px; }
.outtools { height: 40px; flex: none; display: flex; align-items: center; padding-left: 11px; position: relative; }
.outlabel { white-space: nowrap; color: #e0e0e0; width: 144px; }
.source { width: 449px; height: 31px; padding: 0 8px 0 5px; }
.osep { width: 2px; height: 26px; background: #3a3a3c; margin: 0 7px; flex: none; }
.oi { width: 22px; height: 22px; margin: 0 5px; }
.wraptext { font: 700 10px "Open Sans", sans-serif; fill: #d0d0d0; }
.cursor { position: absolute; left: 1445px; top: 9px; width: 16px; height: 26px; }
.outbody { height: 160px; flex: none; display: flex; }
.outtext { flex: 1; min-width: 0; overflow: hidden; padding: 0 0 0 18px; background: #1f1f20; }
.ol { height: 22.500px; line-height: 22.500px; white-space: pre; font-family: "Liberation Mono", "Noto Sans CJK SC", monospace; font-size: 16px; letter-spacing: -.6px; color: #dcdcdc; }
.z { font-family: "Noto Sans CJK SC", sans-serif; font-size: 18px; letter-spacing: 0; }
.outvsb { width: 30px; flex: none; background: #2b2b2d; display: flex; flex-direction: column; align-items: center; padding: 11px 0 10px; }
.outthumb { width: 16px; height: 40px; margin-top: 36px; background: #4d4d50; flex: none; }
.outmark { width: 100%; height: 3px; background: #b8b8b8; flex: none; margin-top: -4px; }
.hsb { height: 22px; flex: none; display: flex; align-items: center; padding-left: 10px; background: #2a2a2c; color: #9a9a9c; border-bottom: 2px solid #3a3a3c; }
.harrow { width: 6px; height: 12px; }
.harrow.right { margin-left: 664px; color: #c8c8c8; }
.hthumb { width: 892px; height: 10px; margin-left: 10px; background: #4d4d50; }
.outtabs { height: 30px; flex: none; display: flex; gap: 6px; }
.btab { height: 28px; display: flex; align-items: center; padding: 2px 6px 0; background: #2d2d30; color: #dcdcdc; white-space: nowrap; }
.btab.on { background: #1f1f20; border-bottom: 3px solid #b8b8b8; color: #f0f0f0; padding: 2px 8px 0; }

/* right */
.rightcol { width: 522px; margin-left: 11px; flex: none; display: flex; flex-direction: column; }
.solution { height: 760px; flex: none; display: flex; flex-direction: column; border: 1px solid #3a3a3c; border-top: 0; }
.soltools { height: 43px; flex: none; display: flex; align-items: center; padding-left: 8px; }
.sc { width: 34px; height: 38px; flex: none; display: flex; align-items: center; justify-content: center; color: #d8d8d8; }
.sc.narrow { width: 20px; }
.dim3 { color: #4a4a4c; }
.ssep { width: 3px; height: 30px; margin: 0 6px; background: #3a3a3c; flex: none; }
.ssep.wide { margin: 0 5px; }
.lightwrench { color: #bdbdbd; }
.active { border: 2px solid #bcbcbc; }
.tree { flex: 1; padding-top: 6px; }
.trow { height: 28px; display: flex; align-items: center; white-space: nowrap; }
.trow.sel { background: #333335; }
.tx { width: 23px; flex: none; }
.tx.wide { width: 38px; }
.tx2 { width: 55px; flex: none; }
.arrowcell { display: flex; justify-content: flex-end; padding-right: 9px; }
.tx2.arrowcell { padding-right: 26px; }
.ti { width: 20px; height: 20px; flex: none; }
.ti.sol { width: 22px; height: 24px; }
.tl { margin-left: 10px; }
.trow:first-child .tl { margin-left: 8px; }
.vb { width: 20px; height: 19px; margin-left: 13px; border: 1.500px solid #9ab8d6; color: #9ab8d6; font: 700 12px/16px "Open Sans", sans-serif; text-align: center; flex: none; }
.vbl { color: #f4f4f4; }
.soltabs { height: 42px; flex: none; display: flex; gap: 4px; padding: 1px 0 0 2px; }
.stab { height: 28px; padding: 2px 8px 0; display: flex; align-items: center; background: #2d2d30; color: #c8c8c8; white-space: nowrap; }
.stab.on { background: #1b1b1c; border-bottom: 3px solid #b8b8b8; color: #efefef; }
.props { flex: 1; min-height: 0; display: flex; flex-direction: column; border: 1px solid #3a3a3c; border-top: 3px solid #6a55d8; }
.prophead { height: 30px; background: #1b1b1c; gap: 12px; padding-top: 0; }
.grip { flex: 1; height: 8px; background-image: radial-gradient(#4a4a4c 1px, transparent 1.200px); background-size: 4px 4px; }
.objrow { height: 32px; flex: none; background: #3a3a3c; display: flex; align-items: center; padding: 0 11px 0 9px; gap: 11px; white-space: nowrap; color: #d8d8d8; }
.objrow .c8 { margin-left: auto; }
.proptools { height: 38px; flex: none; display: flex; align-items: center; padding-left: 4px; }
.pt { width: 34px; height: 33px; flex: none; display: flex; align-items: center; justify-content: center; }
.pt.boxed { border: 1px solid #8c8c8c; }
.pt.gapl { margin-left: 7px; }
.psep { width: 1px; height: 30px; margin: 0 1px; background: #3a3a3c; flex: none; }
.pgrid { height: 374px; flex: none; display: flex; background: #2a2a2c; padding-top: 3px; overflow: hidden; }
.prows { width: 491px; flex: none; }
.psec { height: 26px; display: flex; align-items: center; padding: 1px 0 0 5px; }
.psec b { margin-left: 8px; color: #e8e8e8; }
.exp { width: 15px; height: 14px; border: 1px solid #cfcfcf; display: block; flex: none; background: linear-gradient(#cfcfcf, #cfcfcf) center / 9px 1px no-repeat; }
.exp.plus { background: linear-gradient(#cfcfcf, #cfcfcf) center / 9px 1px no-repeat, linear-gradient(#cfcfcf, #cfcfcf) center / 1px 9px no-repeat; }
.prow { height: 26px; display: flex; align-items: center; }
.gut { width: 21px; height: 100%; flex: none; display: flex; align-items: center; padding-left: 5px; }
.pk, .pv { height: 100%; display: flex; align-items: center; background: #1c1c1d; border-bottom: 1px solid #303032; white-space: nowrap; color: #dadada; }
.pk { width: 228px; padding-left: 5px; border-right: 3px solid #2a2a2c; }
.pv { flex: 1; padding-left: 3px; }
.pk.picked { background: #6a55d8; color: #eee; border-bottom-color: #6a55d8; }
.hi { background: #0a6fc4; color: #fff; padding: 0 1px; height: 22px; line-height: 22px; }
.stub { height: 7px; }
.pvsb { flex: 1; display: flex; flex-direction: column; align-items: center; padding: 10px 0 4px; }
.pvsb .sbup, .pvsb .sbdn { width: 12px; height: 7px; }
.pthumb { width: 15px; height: 69px; margin-top: 136px; background: #4d4d50; flex: none; }
.pdesc { flex: 1; display: flex; flex-direction: column; padding: 8px 0 0 9px; }
.pdesc b { line-height: 24px; color: #dcdcdc; }
.pdesc span { margin: 3px 0 0 -2px; color: #dcdcdc; }

/* status */
.status { height: 36px; flex: none; display: flex; align-items: center; background: #3f3f41; padding-left: 7px; color: #ededed; }
.stico { width: 22px; height: 20px; }
.ready { margin-left: 11px; }
.stright { margin-left: auto; display: flex; align-items: center; white-space: nowrap; }
.up { width: 12px; height: 18px; margin-right: 14px; }
.tri { width: 0; height: 0; margin: 0 34px 0 9px; border: 5.500px solid transparent; border-top: 0; border-bottom: 8px solid #ededed; }
.gitd { width: 18px; height: 24px; margin-right: 13px; }
.stright .tri + .gitd { margin-left: 5px; }
.bell { width: 24px; height: 30px; margin: 0 31px 0 1px; position: relative; }
.bell svg { width: 20px; height: 26px; }
.bellcount { position: absolute; right: -3px; bottom: -2px; width: 16px; height: 20px; border-radius: 50%; background: #f47f92; color: #222; font: 12px/20px "Open Sans", sans-serif; text-align: center; }

/* taskbar */
.taskbar { height: 72px; flex: none; display: flex; align-items: center; position: relative; color: #222; background: linear-gradient(90deg, #eaeff6 0, #d8e8f6 12%, #e2ebf5 30%, #dfe7f3 60%, #e4e4f2 66%, #d6eaf8 72%, #e0e3f2 90%, #e3e3f2 100%); }
.dock { display: flex; gap: 29.400px; margin-left: 1001px; align-items: center; }
.tk { width: 36px; height: 36px; position: relative; flex: none; }
.tk svg { width: 36px; height: 36px; }
.dotted::after { content: ""; position: absolute; left: 15px; bottom: -13px; width: 6px; height: 6px; border-radius: 50%; background: #7f8a96; }
.tkon::before { content: ""; position: absolute; inset: -9px -8px -18px; background: rgba(255,255,255,.55); border-radius: 6px 6px 0 0; }
.tkon svg { position: relative; }
.tkon::after { content: ""; position: absolute; left: 6px; right: 6px; bottom: -12px; height: 4px; border-radius: 2px; background: #1478c8; }
.tray { margin-left: auto; display: flex; align-items: center; padding-right: 28px; white-space: nowrap; }
.temp { display: flex; flex-direction: column; align-items: center; line-height: 25px; }
.chev { width: 18px; height: 12px; margin-left: 21px; }
.mic { width: 18px; height: 30px; margin-left: 24px; }
.ime { margin-left: 27px; font-size: 21px; }
.wifi { width: 24px; height: 24px; margin-left: 24px; }
.spk { width: 24px; height: 24px; margin-left: 12px; }
.bat { width: 26px; height: 24px; margin-left: 12px; }
.clock { display: flex; flex-direction: column; align-items: flex-end; margin-left: 22px; line-height: 25px; font-size: 16.500px; }
```
